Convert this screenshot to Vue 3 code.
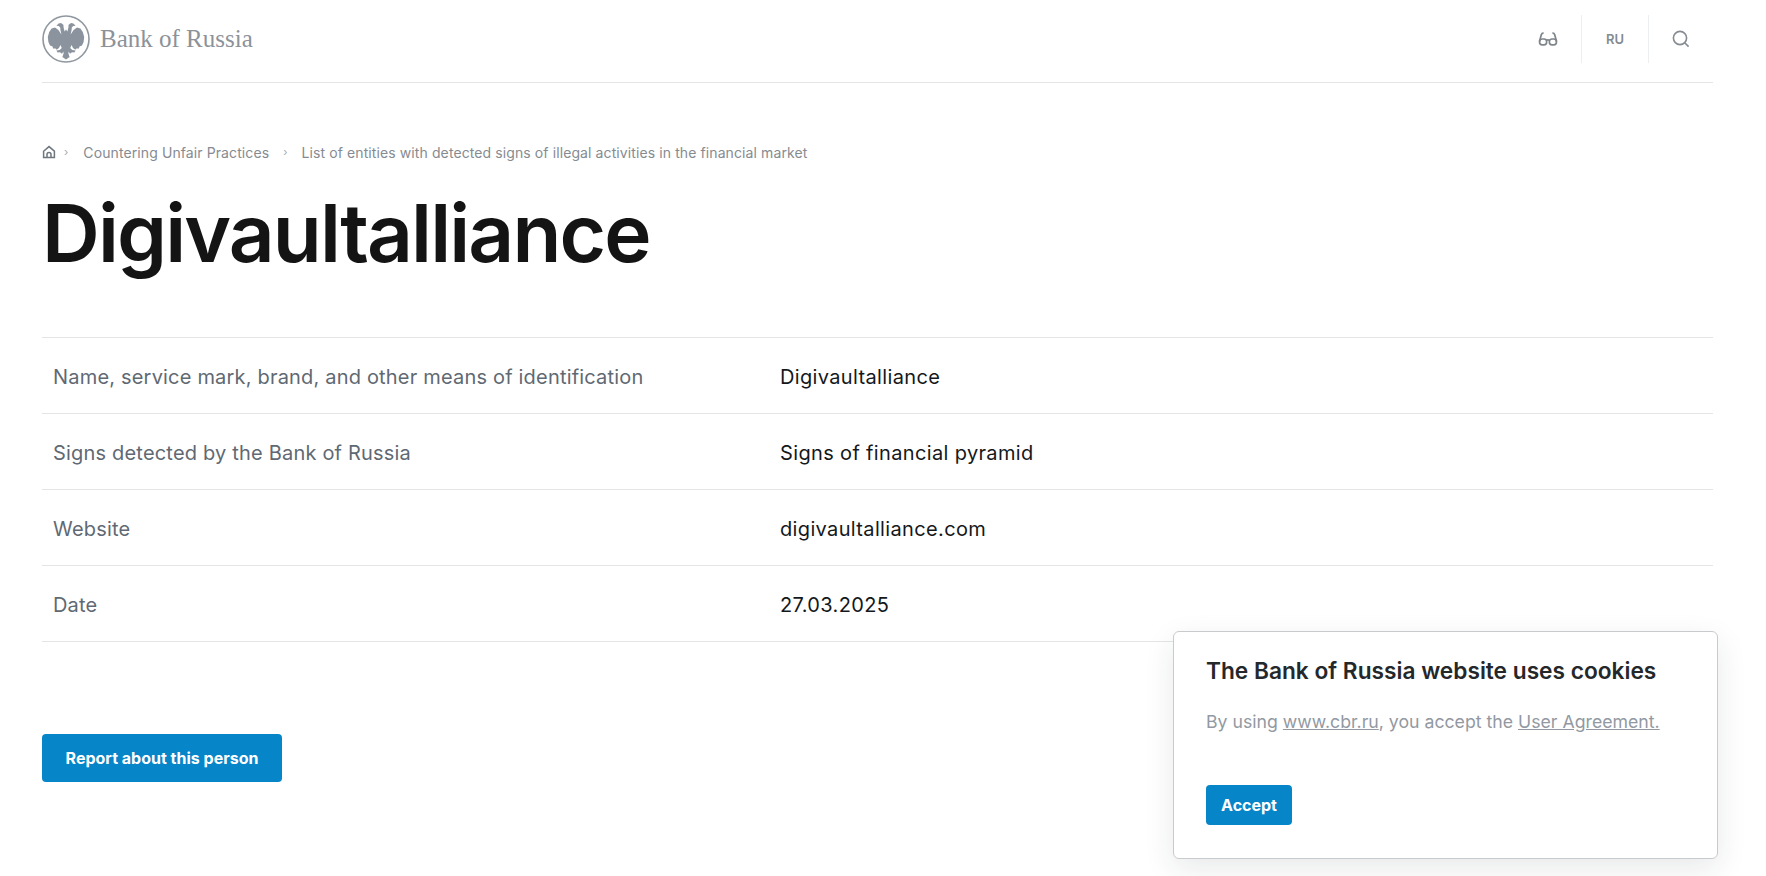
<script setup>
const rows = [
  ['Name, service mark, brand, and other means of identification', 'Digivaultalliance'],
  ['Signs detected by the Bank of Russia', 'Signs of financial pyramid'],
  ['Website', 'digivaultalliance.com'],
  ['Date', '27.03.2025'],
]
const half = 'M24 14.5L22.6 16.5 21.6 12.5 21.4 9.8 19 8 16.6 8.4 14.4 10.8 16.8 11 18.2 12.4 18.4 15 19.4 19.4 16.4 15 13 12.6 9.6 13.6 7.2 17 5.8 22 6.4 27 8 30.4 10.6 31.6 11 33.6 13.6 33.4 14.6 34.8 17 33 18.4 30 19.8 33 17.6 35 14.4 35.4 15.6 37.4 18 37.2 20 38.8 21.4 36.6 21.6 38.6 20.4 42 24 44.6Z'
</script>

<template>
  <div class="page">
    <header class="header">
      <a class="logo">
        <svg class="emblem" viewBox="0 0 48 48" width="48" height="48">
          <circle cx="24" cy="24" r="23" fill="#fff" stroke="#8f979f" stroke-width="1.6" />
          <path fill="#8b949e" :d="half" />
          <path fill="#8b949e" :d="half" transform="matrix(-1 0 0 1 48 0)" />
        </svg>
        <span class="logo-text">Bank of Russia</span>
      </a>
      <div class="tools">
        <div class="tool">
          <svg viewBox="0 0 20 14" width="20" height="14" fill="none" stroke="#7f858b" stroke-width="1.7">
            <rect x="1.6" y="7" width="7" height="5.8" rx="2.6" />
            <rect x="11.4" y="7" width="7" height="5.8" rx="2.6" />
            <path d="M1.4 9.5L3.4 2.6Q3.8 1 5.6 1.2M18.6 9.5L16.6 2.6Q16.2 1 14.4 1.2M8.4 8.4Q10 7.2 11.6 8.4" />
          </svg>
        </div>
        <div class="tool lang">RU</div>
        <div class="tool">
          <svg class="search" viewBox="0 0 18 18" width="18" height="18" fill="none" stroke="#858b91" stroke-width="1.6">
            <circle cx="8" cy="8" r="6.6" />
            <path d="M12.7 12.7L16.6 16.6" />
          </svg>
        </div>
      </div>
    </header>

    <nav class="crumbs">
      <svg class="home" viewBox="0 0 14 14" width="14" height="14" fill="none" stroke="#6e767e" stroke-width="1.5">
        <path d="M1.6 6.2L7 1.6l5.4 4.6V12.6H1.6z" />
        <path d="M5 12.6V9.6a2 2 0 0 1 4 0v3" />
      </svg>
      <span class="sep first">›</span>
      <span>Countering Unfair Practices</span>
      <span class="sep">›</span>
      <span>List of entities with detected signs of illegal activities in the financial market</span>
    </nav>

    <h1 class="title">Digivaultalliance</h1>

    <div class="table">
      <div v-for="row in rows" :key="row[0]" class="row">
        <div class="label">{{ row[0] }}</div>
        <div class="value">{{ row[1] }}</div>
      </div>
    </div>

    <button class="btn report">Report about this person</button>

    <aside class="cookie">
      <h2 class="cookie-title">The Bank of Russia website uses cookies</h2>
      <p class="cookie-text">By using <a>www.cbr.ru</a>, you accept the <a>User Agreement.</a></p>
      <button class="btn accept">Accept</button>
    </aside>
  </div>
</template>

<style>
html, body { margin: 0; background: #fff; overflow: hidden; }
</style>

<style scoped>
.page {
  position: relative;
  height: 876px;
  box-sizing: border-box;
  padding: 0 53px 0 42px;
  font-family: Inter, "Noto Sans", sans-serif;
  color: #15181b;
  overflow: hidden;
}
.header {
  display: flex;
  justify-content: space-between;
  align-items: center;
  height: 83px;
  padding-bottom: 5px;
  box-sizing: border-box;
  border-bottom: 1px solid #e3e5e7;
}
.logo { display: flex; align-items: center; gap: 10px; }
.emblem { display: block; }
.logo-text {
  font-family: "Liberation Serif", serif;
  font-size: 25px;
  color: #8b9299;
}
.tools { display: flex; align-items: center; height: 48px; margin-right: -2px; }
.tool {
  width: 66px;
  height: 48px;
  display: flex;
  align-items: center;
  justify-content: center;
  border-right: 1px solid #eceeef;
}
.tool:last-child { border-right: 0; }
.search { margin-right: 2px; }
.lang { font-size: 13px; font-weight: 600; color: #858b91; }
.crumbs {
  display: flex;
  align-items: center;
  margin-top: 60px;
  height: 18px;
  font-size: 14px;
  letter-spacing: 0.1px;
  color: #858b91;
}
.sep { font-size: 11px; color: #a5aab0; margin: 0 14px 0 14px; }
.sep.first { margin: 0 15px 0 8px; }
.home { display: block; }
.title {
  margin: 24px 0 0;
  font-size: 80px;
  line-height: 96px;
  font-weight: 600;
  letter-spacing: -1.85px;
  color: #141414;
}
.table { margin-top: 56px; border-top: 1px solid #e3e5e7; }
.row {
  display: grid;
  grid-template-columns: 727px 1fr;
  height: 76px;
  box-sizing: border-box;
  align-items: center;
  padding: 2px 0 0 11px;
  border-bottom: 1px solid #e3e5e7;
  font-size: 20px;
  letter-spacing: 0.19px;
}
.label { color: #5f6973; }
.value { color: #15181b; letter-spacing: 0.35px; }
.btn {
  border: 0;
  background: #0685c9;
  color: #fff;
  font-family: inherit;
  font-weight: 700;
  border-radius: 4px;
  padding: 0;
  display: block;
}
.report {
  margin-top: 92px;
  width: 240px;
  height: 48px;
  font-size: 16px;
}
.cookie {
  position: absolute;
  left: 1173px;
  top: 631px;
  width: 545px;
  height: 228px;
  box-sizing: border-box;
  padding: 23px 32px;
  background: #fff;
  border: 1px solid #c8cbce;
  border-radius: 6px;
  box-shadow: 0 10px 30px rgba(30, 40, 50, 0.1);
}
.cookie-title {
  margin: 0;
  font-size: 22.7px;
  line-height: 32px;
  font-weight: 600;
  color: #25282b;
}
.cookie-text {
  margin: 21px 0 0;
  font-size: 17.7px;
  line-height: 28px;
  color: #9299a2;
}
.cookie-text a { text-decoration: underline; }
.accept {
  margin-top: 49px;
  width: 86px;
  height: 40px;
  font-size: 16px;
}
</style>
